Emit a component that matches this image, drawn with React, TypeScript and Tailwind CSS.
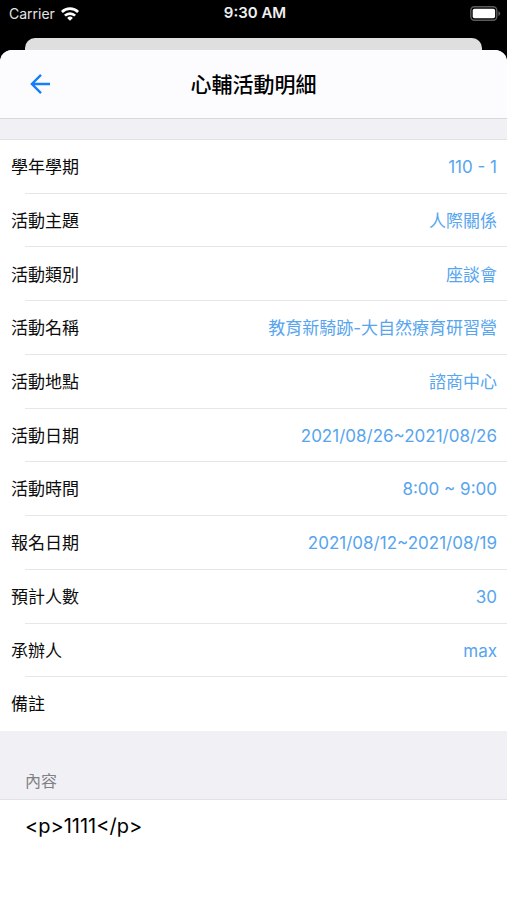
import { useId } from "react";

const rows = [
  { label: "學年學期", value: "110 - 1" },
  { label: "活動主題", value: "人際關係" },
  { label: "活動類別", value: "座談會" },
  { label: "活動名稱", value: "教育新騎跡-大自然療育研習營" },
  { label: "活動地點", value: "諮商中心" },
  { label: "活動日期", value: "2021/08/26~2021/08/26" },
  { label: "活動時間", value: "8:00 ~ 9:00" },
  { label: "報名日期", value: "2021/08/12~2021/08/19" },
  { label: "預計人數", value: "30" },
  { label: "承辦人", value: "max" },
  { label: "備註", value: "" },
];

function WifiIcon() {
  return (
    <svg width="18" height="14" viewBox="0 0 18 14" fill="none" stroke="white" strokeWidth="2.6" aria-hidden="true">
      <path d="M.9 5a11.5 11.5 0 0 1 16.2 0" />
      <path d="M3.9 8.7a7.2 7.2 0 0 1 10.2 0" />
      <path d="M9 13.7 6.1 10.9a4.1 4.1 0 0 1 5.8 0z" fill="white" stroke="none" />
    </svg>
  );
}

function BatteryIcon() {
  return (
    <svg width="31" height="15" viewBox="0 0 31 15" fill="none" aria-hidden="true">
      <rect x="0.8" y="0.8" width="26" height="13.4" rx="3.6" stroke="#5c5c5c" strokeWidth="1.4" />
      <rect x="2.7" y="2.7" width="22.4" height="9.6" rx="1.8" fill="white" />
      <path d="M28.4 5.2c2.4.8 2.4 3.8 0 4.6z" fill="#5c5c5c" />
    </svg>
  );
}

function StatusBar() {
  return (
    <div className="grid h-[27px] grid-cols-3 items-center pl-[9px] pr-[6px] text-white">
      <div className="flex items-center gap-[6px]">
        <span className="text-[14px] text-[#e4e4e4]">Carrier</span>
        <WifiIcon />
      </div>
      <span className="text-center text-[15px] font-semibold text-[#f0f0f0]">9:30 AM</span>
      <div className="flex justify-end">
        <BatteryIcon />
      </div>
    </div>
  );
}

function Row({ label, value, last }: { label: string; value: string; last: boolean }) {
  return (
    <div className="relative flex items-center justify-between pl-[11px] pr-[10px] pt-[2px] text-[17px]">
      <dt className="text-[#0c0c0c]">{label}</dt>
      <dd className="text-[#57a5ee]">{value}</dd>
      {!last && <div className="absolute bottom-0 left-[25px] right-0 h-px bg-[#e6e6e8]" />}
    </div>
  );
}

export default function App() {
  const headingId = useId();

  return (
    <div className="flex min-h-screen flex-col bg-black font-['Inter','Noto_Sans_CJK_TC',sans-serif]">
      <StatusBar />
      {/* edge of the sheet behind */}
      <div className="mx-[25px] mt-[11px] h-3 rounded-t-[10px] bg-[#dfdfdf]" />
      <main className="flex flex-1 flex-col overflow-hidden rounded-t-[12px] bg-white">
        <header className="grid h-[69px] grid-cols-[80px_1fr_80px] items-center border-b border-[#d8d8dc] bg-[#fcfcfe]">
          <button type="button" aria-label="返回" className="flex h-full items-center pl-[30px]">
            <svg width="20" height="20" viewBox="0 0 20 20" fill="none" stroke="#147efb" strokeWidth="2.4" aria-hidden="true">
              <path d="M20 10H2.2M11 .9 1.9 10l9.1 9.1" />
            </svg>
          </button>
          <h1 className="pt-px text-center text-[21px] font-medium text-black">心輔活動明細</h1>
        </header>
        <div className="h-[21px] border-b border-[#e2e2e5] bg-[#f0f0f5]" />
        <dl className="grid min-h-[591px] auto-rows-fr">
          {rows.map((row, i) => (
            <Row key={row.label} label={row.label} value={row.value} last={i === rows.length - 1} />
          ))}
        </dl>
        <section aria-labelledby={headingId}>
          <h2 id={headingId} className="flex h-[69px] items-end border-b border-[#e2e2e5] bg-[#f0f0f5] px-[25px] pb-[6px] text-[16px] text-[#808085]">
            內容
          </h2>
          <p className="px-[25px] py-3 text-[20px] leading-7 text-black">{"<p>1111</p>"}</p>
        </section>
      </main>
    </div>
  );
}
